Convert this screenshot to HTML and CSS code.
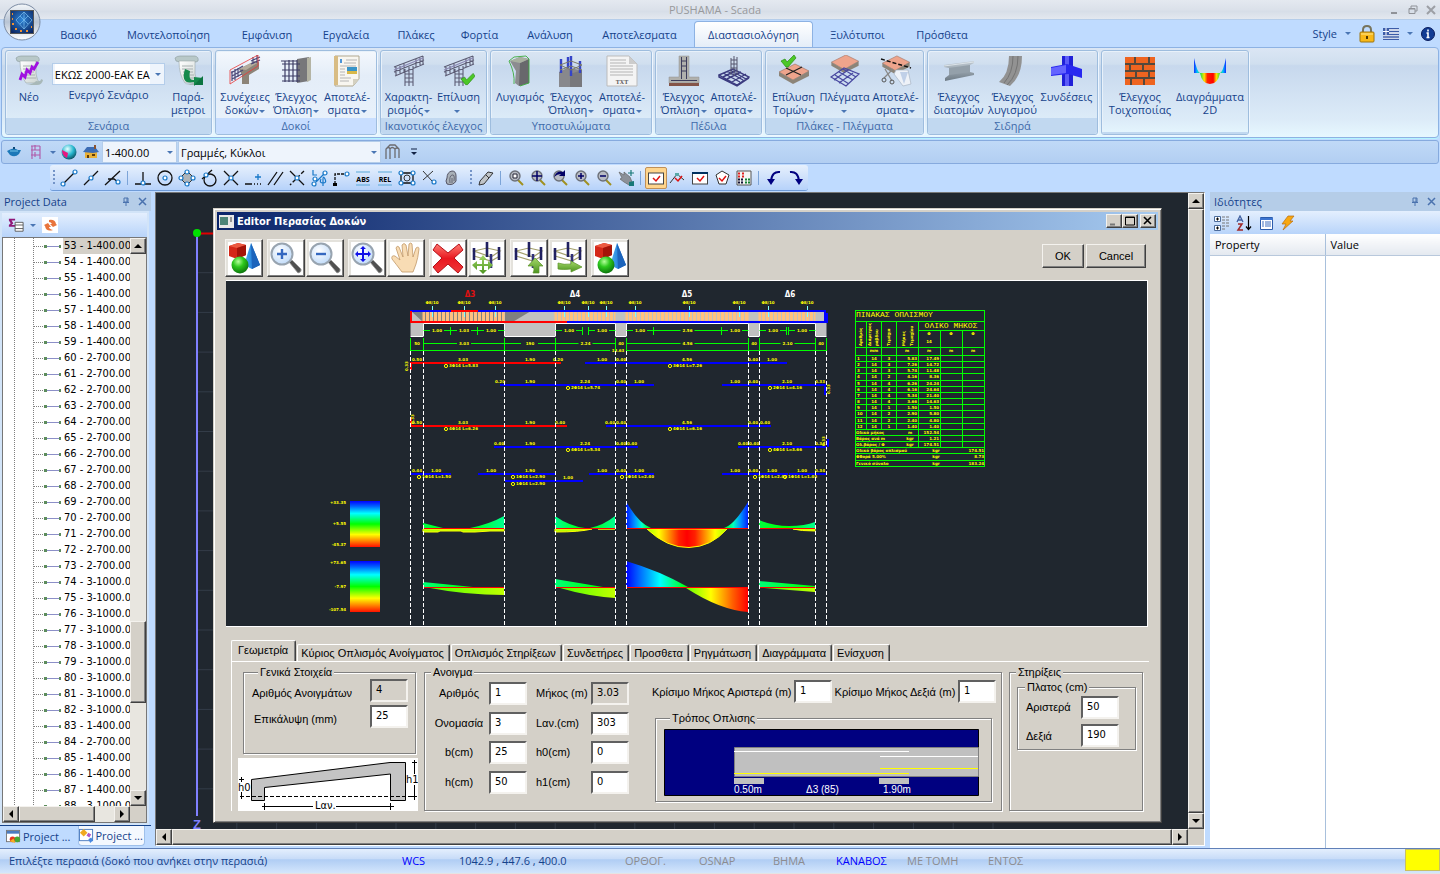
FILE: index.html
```html
<!DOCTYPE html>
<html lang="el">
<head>
<meta charset="utf-8">
<title>PUSHAMA - Scada</title>
<link rel="stylesheet" href="styles.css">
</head>
<body>
<svg class="defs" aria-hidden="true">
  <defs>
    <linearGradient id="gDoc" x1="0" y1="0" x2="1" y2="1"><stop offset="0" stop-color="#fff"/><stop offset="1" stop-color="#c9d2cf"/></linearGradient>
    <linearGradient id="gSteel" x1="0" y1="0" x2="0" y2="1"><stop offset="0" stop-color="#c2ccd4"/><stop offset="1" stop-color="#6d7a85"/></linearGradient>
    <radialGradient id="gBall" cx=".4" cy=".3" r=".8"><stop offset="0" stop-color="#b4ff9a"/><stop offset=".4" stop-color="#2cc81c"/><stop offset="1" stop-color="#06600a"/></radialGradient>
    <radialGradient id="gLens" cx=".4" cy=".35" r=".8"><stop offset="0" stop-color="#fff"/><stop offset="1" stop-color="#b4d4f8"/></radialGradient>
    <radialGradient id="gOrb" cx=".4" cy=".3" r=".8"><stop offset="0" stop-color="#e8ffff"/><stop offset=".5" stop-color="#28b8d0"/><stop offset="1" stop-color="#023848"/></radialGradient>
    <radialGradient id="gLogo" cx=".5" cy=".4" r=".7"><stop offset="0" stop-color="#2f86d8"/><stop offset="1" stop-color="#0a2460"/></radialGradient>
    <linearGradient id="gRing" x1="0" y1="0" x2="0" y2="1"><stop offset="0" stop-color="#f4f7fa"/><stop offset=".5" stop-color="#b8c4d4"/><stop offset="1" stop-color="#fff"/></linearGradient>
    <linearGradient id="gCone" x1="0" y1="0" x2="1" y2="0"><stop offset="0" stop-color="#4fb4f4"/><stop offset=".5" stop-color="#2a86dc"/><stop offset="1" stop-color="#0a4ea4"/></linearGradient>
    <linearGradient id="gX" x1="0" y1="0" x2="0" y2="1"><stop offset="0" stop-color="#ff7a70"/><stop offset=".5" stop-color="#e81820"/><stop offset="1" stop-color="#f03838"/></linearGradient>
    <linearGradient id="gLeaf" x1="0" y1="0" x2="0" y2="1"><stop offset="0" stop-color="#a4d868"/><stop offset="1" stop-color="#4c9420"/></linearGradient>
    <linearGradient id="gMag" x1="0" y1="0" x2="1" y2="0"><stop offset="0" stop-color="#1030ff"/><stop offset=".1" stop-color="#00c8ff"/><stop offset=".2" stop-color="#20e040"/><stop offset=".32" stop-color="#ffe000"/><stop offset=".42" stop-color="#ff2000"/><stop offset=".6" stop-color="#ff0000"/><stop offset=".7" stop-color="#ffe000"/><stop offset=".82" stop-color="#20e040"/><stop offset=".9" stop-color="#00c8ff"/><stop offset="1" stop-color="#1030ff"/></linearGradient>
    <linearGradient id="gRain" x1="0" y1="0" x2="0" y2="1"><stop offset="0" stop-color="#0000ff"/><stop offset=".12" stop-color="#0068ff"/><stop offset=".27" stop-color="#00ffff"/><stop offset=".5" stop-color="#00ff00"/><stop offset=".73" stop-color="#ffff00"/><stop offset="1" stop-color="#ff1000"/></linearGradient>
    <linearGradient id="gUp1" x1="0" y1="0" x2="1" y2="0"><stop offset="0" stop-color="#00ff40"/><stop offset=".5" stop-color="#00ff00"/><stop offset="1" stop-color="#00ff90"/></linearGradient>
    <linearGradient id="gUp2" x1="0" y1="0" x2="1" y2="0"><stop offset="0" stop-color="#00ff90"/><stop offset=".5" stop-color="#00ff00"/><stop offset="1" stop-color="#00ff90"/></linearGradient>
    <linearGradient id="gUp3" gradientUnits="userSpaceOnUse" x1="626" y1="0" x2="748" y2="0"><stop offset="0" stop-color="#0018ff"/><stop offset=".08" stop-color="#00a0ff"/><stop offset=".13" stop-color="#00ffd0"/><stop offset=".2" stop-color="#00ff00"/><stop offset=".8" stop-color="#00ff00"/><stop offset=".88" stop-color="#00ffc0"/><stop offset=".94" stop-color="#0090ff"/><stop offset="1" stop-color="#0020ff"/></linearGradient>
    <linearGradient id="gLow3" x1="0" y1="0" x2="1" y2="0"><stop offset="0" stop-color="#a0ff00"/><stop offset=".15" stop-color="#ffff00"/><stop offset=".4" stop-color="#ff2000"/><stop offset=".5" stop-color="#ff0000"/><stop offset=".6" stop-color="#ff2000"/><stop offset=".85" stop-color="#ffff00"/><stop offset="1" stop-color="#a0ff00"/></linearGradient>
    <linearGradient id="gSh3" x1="0" y1="0" x2="1" y2="0"><stop offset="0" stop-color="#0000ff"/><stop offset=".2" stop-color="#0060ff"/><stop offset=".55" stop-color="#00ffff"/><stop offset="1" stop-color="#00ff00"/></linearGradient>
    <linearGradient id="gSh4" x1="0" y1="0" x2="1" y2="0"><stop offset="0" stop-color="#60ff00"/><stop offset=".4" stop-color="#ffff00"/><stop offset=".75" stop-color="#ff6000"/><stop offset="1" stop-color="#ff0000"/></linearGradient>
    <linearGradient id="gShU" x1="0" y1="0" x2="1" y2="0"><stop offset="0" stop-color="#00ff78"/><stop offset="1" stop-color="#00ff00"/></linearGradient>
    <linearGradient id="gShL" x1="0" y1="0" x2="1" y2="0"><stop offset="0" stop-color="#50ff00"/><stop offset="1" stop-color="#c0ff00"/></linearGradient>
    <symbol id="i-scroll" viewBox="0 0 32 32"><path d="M3 3q2-2 5-2h15q4 1 3 5l-2 1H8l-4-1z" fill="#b8c8c8" stroke="#8a9a9c" stroke-width=".6"/><path d="M7 6h16v13q1 7 4 9H13q-6-8-6-22z" fill="url(#gDoc)" stroke="#9aa8a8" stroke-width=".6"/><path d="M23 26q5 1 5-2l2 1q-1 5-6 5H13q8-1 10-4z" fill="#a8b8b8"/><path d="M10 11h11M10 14h11M11 17h10M11 20h11M12 23h11" stroke="#a8b0b0"/></symbol>
    <symbol id="i-cage" viewBox="0 0 32 32"><g fill="none" stroke="#5c5c74" stroke-width="1.100"><path d="M1 12L30 1M1 17L31 5M2 21L31 9M12 14v17M16 12v19M20 11v20M12 19h8M12 23h8M12 27h8M3 11v9M7 9v10M11 8v9M23 4v9M27 2v9M30 1v8"/></g><path d="M1 15L30 3" stroke="#8c88b4" stroke-width="1.200"/></symbol>
    <symbol id="i-check" viewBox="0 0 16 14"><path d="M1 7l4-2 2 3 7-7 2 3-8 9H6z" fill="#4cc828" stroke="#2a8c14" stroke-width=".7"/></symbol>
    <symbol id="i-slab" viewBox="0 0 32 22"><path d="M1 9L17 1l14 7-16 9z" fill="#eea48c" stroke="#9c6a58" stroke-width=".6"/><path d="M1 9v4l14 8v-4zM31 8v5l-16 8v-4z" fill="#8c8478"/></symbol>
    <symbol id="i-shapes" viewBox="0 0 32 32"><path d="M1 4l9-3 8 2v10l-9 4-8-3z" fill="#d42818"/><path d="M1 4l8 2 9-3-8-2z" fill="#ec5a40"/><path d="M9 6v11l9-4V3z" fill="#a41408"/><path d="M23 1l9 22-8 4-8-4z" fill="url(#gCone)"/><path d="M23 1l1 26 8-4z" fill="#1c64bc"/><circle cx="12" cy="23" r="8.500" fill="url(#gBall)"/></symbol>
    <symbol id="i-lens" viewBox="0 0 32 32"><path d="M19 20l3-2 9 9q1 3-3 4z" fill="#505050" stroke="#999" stroke-width=".8"/><circle cx="12" cy="12" r="10.500" fill="url(#gLens)" stroke="#98a4b0" stroke-width="2"/></symbol>
    <symbol id="i-poles" viewBox="0 0 32 32"><path d="M3 9l13-3 13 3-9 6zM3 14l17 5 9-5" fill="none" stroke="#a4a06c" stroke-width="1.200"/><path d="M3 6v12M16 0v15M28 5v13" stroke="#202060" stroke-width="2.600"/><path d="M20 12v14" stroke="#303078" stroke-width="2.600"/></symbol>
    <symbol id="i-zoom" viewBox="0 0 16 16"><path d="M9 9l6 6" stroke="#a09020" stroke-width="2"/><circle cx="7" cy="6" r="5" fill="#b8bcc4" stroke="#6c7078" stroke-width="1.400"/></symbol>
    <symbol id="i-win" viewBox="0 0 16 12"><rect x=".5" y=".5" width="15" height="11" fill="#fff" stroke="#444"/></symbol>
    <symbol id="i-pin" viewBox="0 0 8 10"><path d="M2 1h4v4H2zM5 1v4M1 5.500h6M4 6v3" fill="none" stroke="#4a72ae"/></symbol>
    <symbol id="i-x" viewBox="0 0 9 9"><path d="M1 1l7 7M8 1L1 8" stroke="#4a72ae" stroke-width="1.500"/></symbol>
  </defs>
</svg>
<div class="app">
  <header class="titlebar">
    <span class="titlebar-text">PUSHAMA - Scada</span>
    <div class="win-controls">
      <button aria-label="Minimize"><svg viewBox="0 0 10 10"><path d="M1 8h6" stroke="#8f9298" stroke-width="2"/></svg></button>
      <button aria-label="Restore"><svg viewBox="0 0 10 10"><path d="M3 3V1h6v5H7M1 3.500h6v5H1zM1 4h6" fill="none" stroke="#8f9298"/></svg></button>
      <button aria-label="Close"><svg viewBox="0 0 10 10"><path d="M1 1l8 8M9 1L1 9" stroke="#9c9fa5" stroke-width="2"/></svg></button>
    </div>
  </header>
  <button class="orb" aria-label="Application menu"><svg viewBox="0 0 38 38"><circle cx="19" cy="19" r="18" fill="url(#gRing)" stroke="#7c8ca4"/><rect x="7.500" y="7.500" width="23" height="23" fill="url(#gLogo)" stroke="#555"/><path d="M21 9l8 8-8 9-8-9zM21 9v17M17 13l8 8M25 13l-8 8" fill="none" stroke="#7cc0f0" stroke-width=".7"/><path d="M9 11h1M9 16h1M9 21h2M12 26h2M17 28h2M23 28h2M28 24h1" stroke="#f09030" stroke-width="1.800"/></svg></button>
  <nav class="menu">
    <button class="m1">Βασικό</button><button class="m2">Μοντελοποίηση</button><button class="m3">Εμφάνιση</button><button class="m4">Εργαλεία</button><button class="m5">Πλάκες</button><button class="m6">Φορτία</button><button class="m7">Ανάλυση</button><button class="m8">Αποτελεσματα</button><button class="m9 active">Διαστασιολόγηση</button><button class="m10">Ξυλότυποι</button><button class="m11">Πρόσθετα</button>
    <div class="menu-right">
      <button>Style <i class="tri"></i></button>
      <button aria-label="Lock"><svg width="16" height="18" viewBox="0 0 16 18"><path d="M4 8V5q0-4 4-4t4 4v3" fill="none" stroke="#77745c" stroke-width="2"/><rect x="1" y="7" width="14" height="10" rx="1" fill="#f8b818" stroke="#9c7410"/><path d="M2 9h12" stroke="#ffe890"/><path d="M8 11v3" stroke="#503800" stroke-width="2"/></svg></button>
      <button aria-label="Language" class="flag"><svg width="16" height="12" viewBox="0 0 16 12"><path fill="#fff" d="M0 0h16v12H0z"/><path d="M0 .5h16M0 3.500h16M0 6.500h16M0 9h16M0 11.500h16" stroke="#3c5ca8" stroke-width="1.300"/><path d="M0 0h6v7H0z" fill="#3c5ca8"/><path d="M3 0v7M0 3.500h6" stroke="#fff"/></svg><i class="tri"></i></button>
      <button aria-label="Info"><svg width="14" height="14" viewBox="0 0 14 14"><circle cx="7" cy="7" r="6.500" fill="#123c94" stroke="#0a1c5c"/><path d="M7 2.500v2M5.500 6H7v4.500M5.500 10.500h3" stroke="#fff" stroke-width="1.600" fill="none"/></svg></button>
    </div>
  </nav>
  <section class="ribbon">
    <div class="group g-scen">
      <div class="group-body">
        <button class="big w46"><svg viewBox="0 0 32 32"><use href="#i-scroll"/><path d="M7 25l2-6 3 3 2-7 3 3 2-6 2 2 4-7" fill="none" stroke="#a010e0" stroke-width="2.800"/></svg><span>Νέο</span></button>
        <div class="combo-col"><div class="pick"><select aria-label="Ενεργό Σενάριο"><option>ΕΚΩΣ 2000-ΕΑΚ ΕΑΚ</option></select><i class="tri"></i></div><span>Ενεργό Σενάριο</span></div>
        <button class="big w46"><svg viewBox="0 0 32 32"><use href="#i-scroll"/><path d="M13 14q-5 16 9 13v4l9-8-9-1v3q-6 1-4-9z" fill="#158a4c"/><path d="M31 21v9h-9z" fill="#0c7440"/></svg><span>Παρά-<br>μετροι</span></button>
      </div><div class="cap">Σενάρια</div>
    </div>
    <div class="group g3 lit">
      <div class="group-body">
        <button class="big"><svg viewBox="0 0 32 32"><path d="M10 14l16-8 4 1v7l-10 6v9h-7V20z" fill="#8c8478"/><path d="M10 14l16-8 4 1-13 8z" fill="#b4ac9c"/><path d="M2 18l12-7M3 21l11-6M3 24l10-5M3 16v10M6 14v11M9 13v9M24 2v7M28 0v8M22 6l9-4M22 9l9-4" stroke="#4c4878" stroke-width="1.200"/><path d="M1 15L29 0v11L1 29z" fill="none" stroke="#e83838" stroke-width=".8"/></svg><span>Συνέχειες<br>δοκών <i class="tri"></i></span></button>
        <button class="big"><svg viewBox="0 0 32 32"><path d="M17 4l12-2v24l-12 2z" fill="#77777a"/><path d="M27 3l4-1v23l-4 2z" fill="#b4b4a4"/><path d="M2 9h18M2 15h18M2 21h18M2 26h18M1 6h16M5 6v21M9 5v22M13 5v22M17 5v22" stroke="#3c3c64" stroke-width="1.200"/></svg><span>Έλεγχος<br>Όπλιση <i class="tri"></i></span></button>
        <button class="big"><svg viewBox="0 0 32 32"><path d="M4 1h24v23l-6 7H4z" fill="#f8f6f0" stroke="#b0a890"/><path d="M3 1h4v29H3z" fill="#d8bc84"/><path d="M28 24l-6 7v-7z" fill="#d4d0c0"/><path d="M9 4h2v4H9z" fill="#4c94d8"/><path d="M15 5h11M13 8h12M9 11h16M9 14h5M9 17h5M9 20h5M9 23h11M9 26h9" stroke="#b4b4b4"/><path d="M16 12h10v7H16z" fill="#3894c8"/><path d="M16 16h10v3H16z" fill="#d8b848"/></svg><span>Αποτελέ-<br>σματα <i class="tri"></i></span></button>
      </div><div class="cap">Δοκοί</div>
    </div>
    <div class="group g2">
      <div class="group-body">
        <button class="big"><svg viewBox="0 0 32 32"><use href="#i-cage"/></svg><span>Χαρακτη-<br>ρισμός <i class="tri"></i></span></button>
        <button class="big"><svg viewBox="0 0 32 32"><use href="#i-cage"/><use href="#i-check" x="17" y="17" width="15" height="14"/></svg><span>Επίλυση<br><i class="tri"></i></span></button>
      </div><div class="cap">Ικανοτικός έλεγχος</div>
    </div>
    <div class="group g3">
      <div class="group-body">
        <button class="big"><svg viewBox="0 0 32 32"><path d="M6 6l10-4 9 2v24l-10 3-4-3 1-12z" fill="#8c8c90"/><path d="M16 8l9-4v24l-10 3z" fill="#68686c"/><path d="M6 6l10-4 9 2-9 4z" fill="#a8b0a0"/><path d="M5 6l5-4 12-1 3 3v24l-9 3M5 6q6 12 5 23" fill="none" stroke="#3cac3c" stroke-width=".9"/></svg><span>Λυγισμός</span></button>
        <button class="big"><svg viewBox="0 0 32 32"><path d="M4 17l8-4 15 2v17H4z" fill="#88888c"/><path d="M15 19l12-4v17H15z" fill="#78787c"/><path d="M6 4v14M16 1v20M25 6v12M13 2v11" stroke="#3444c8" stroke-width="2.400"/><path d="M5 10l11-4 11 4-11 5zM5 15l11-4 11 4" fill="none" stroke="#7c7c68"/></svg><span>Έλεγχος<br>Όπλιση <i class="tri"></i></span></button>
        <button class="big"><svg viewBox="0 0 32 32"><path d="M1 1h22l8 8v22H1z" fill="#f4f4f4" stroke="#bbb"/><path d="M23 1v8h8z" fill="#ccc"/><path d="M4 5h16M4 8h16M4 11h23M4 14h23M4 17h23M4 20h23" stroke="#b4b4b4" stroke-width="1.200"/><text x="16" y="29" class="ico-serif" text-anchor="middle">TXT</text></svg><span>Αποτελέ-<br>σματα <i class="tri"></i></span></button>
      </div><div class="cap">Υποστυλώματα</div>
    </div>
    <div class="group g2">
      <div class="group-body">
        <button class="big"><svg viewBox="0 0 32 32"><path d="M11 1h10v21h10v6H1v-6h10z" fill="#b0b0ac" stroke="#909090" stroke-width=".5"/><path d="M13.500 2v22M18.500 2v22M13 6h6M13 11h6M13 16h6M3 25.500h26" stroke="#3c3c5c"/><path d="M1 28h30v3H1z" fill="#845448"/></svg><span>Έλεγχος<br>Όπλιση <i class="tri"></i></span></button>
        <button class="big"><svg viewBox="0 0 32 32"><path d="M1 20l14-6 16 8-12 8zM5 18l17 9M9 16l16 9M12 15l16 9M5 22l14-7M9 24l14-7M14 27l14-8M1 20v2l18 9 12-8" fill="none" stroke="#3c3c80" stroke-width="1.400"/><path d="M13 3v17M16 1v20M19 2v18M13 5h6M13 9h6M13 13h6" stroke="#54546c"/></svg><span>Αποτελέ-<br>σματα <i class="tri"></i></span></button>
      </div><div class="cap">Πέδιλα</div>
    </div>
    <div class="group g-slab">
      <div class="group-body">
        <button class="big"><svg viewBox="0 0 32 32"><use href="#i-slab" y="8" width="32" height="22"/><path d="M8 13l15 7M24 12L8 20" stroke="#222" stroke-width="1.200"/><use href="#i-check" x="1" y="-1" width="18" height="14"/></svg><span>Επίλυση<br>Τομών <i class="tri"></i></span></button>
        <button class="big"><svg viewBox="0 0 32 32"><use href="#i-slab" y="-1" width="32" height="20"/><path d="M2 22l13-9 15 6-13 12zM6 20l14 9M10 17l14 8M5 25l14-10M10 28l14-10M14 14l13 8" fill="none" stroke="#4848a0" stroke-width="1.200"/></svg><span>Πλέγματα<br><i class="tri"></i></span></button>
        <button class="big"><svg viewBox="0 0 32 32"><use href="#i-slab" y="0" width="32" height="20"/><path d="M1 4l30 9" stroke="#111" stroke-width="1.500" stroke-dasharray="4 2"/><path d="M16 15h12l3 14-8 2-9-12z" fill="#eef2f8" stroke="#a8b4c4" stroke-width=".7"/><path d="M20 17l4 12 4-12z" fill="#c0d0e8"/><path d="M5 14l7 12M13 14L4 23" stroke="#888" stroke-width="1.300"/><circle cx="4" cy="25" r="2" fill="none" stroke="#555"/><circle cx="12" cy="27" r="2" fill="none" stroke="#555"/></svg><span>Αποτελέ-<br>σματα <i class="tri"></i></span></button>
      </div><div class="cap">Πλάκες - Πλέγματα</div>
    </div>
    <div class="group g-steel">
      <div class="group-body">
        <button class="big w54"><svg viewBox="0 0 32 32"><path d="M1 10l30-4v2l-4 2v7l4 1v2L2 26v-3l4-3v-7l-5-1z" fill="url(#gSteel)"/><path d="M6 13l21-3v7L6 20z" fill="#94a0aa"/><path d="M1 11l30-4" stroke="#dce4ea"/></svg><span>Έλεγχος<br>διατομών</span></button>
        <button class="big w54"><svg viewBox="0 0 32 32"><path d="M12 1l13 0q0 20-12 30l-11-4q10-8 10-26z" fill="#929292"/><path d="M16 1q0 17-9 27M21 1q0 19-11 29" fill="none" stroke="#747474"/></svg><span>Έλεγχος<br>λυγισμού</span></button>
        <button class="big w54"><svg viewBox="0 0 32 32"><path d="M11 1h11v30H11z" fill="#2020d8"/><path d="M14 1h4v30h-4z" fill="#5c5cf8"/><path d="M0 12l16-3 15 5v9l-14-4-17 2z" fill="#2828f0"/><path d="M0 13l15-3v8L0 20z" fill="#6464ff"/></svg><span>Συνδέσεις</span></button>
      </div><div class="cap">Σιδηρά</div>
    </div>
    <div class="group g-last">
      <div class="group-body">
        <button class="big w70"><svg viewBox="0 0 32 32"><path d="M1 2h30v28H1z" fill="#54483c"/><path d="M1 2h9v6H1zM12 2h12v6H12zM26 2h5v6h-5zM1 10h4v5H1zM7 10h11v5H7zM20 10h11v5H20zM1 17h10v5H1zM13 17h11v5H13zM26 17h5v5h-5zM1 24h5v6H1zM8 24h11v6H8zM21 24h10v6H21z" fill="#ee6420"/></svg><span>Έλεγχος<br>Τοιχοποιίας</span></button>
        <button class="big w70"><svg viewBox="0 0 32 32"><path d="M0 3q3 14 6 15h20q3-1 6-15v15h-6q-2 11-10 11T6 18H0z" fill="url(#gMag)"/></svg><span>Διαγράμματα<br>2D</span></button>
      </div><div class="cap empty"></div>
    </div>
  </section>
  <div class="quick">
    <button aria-label="Render"><svg viewBox="0 0 16 16"><path d="M3 6q5-3 9 0l3 0-2 4q-4 4-9 1l-3-4z" fill="#1c78b8"/><path d="M4 7h8" stroke="#74c4e8"/><path d="M7 4h2" stroke="#0c4878" stroke-width="2"/></svg></button>
    <button aria-label="Structure" class="wide"><svg viewBox="0 0 16 16"><path d="M4 2v13M12 2v13M7 1v5M7 8v5M3 2h9M3 6h9M3 11h9" stroke="#b058a8" stroke-width="1.100"/></svg><i class="tri"></i></button>
    <button aria-label="Material"><svg viewBox="0 0 16 16"><circle cx="8" cy="8" r="7.500" fill="url(#gOrb)"/><path d="M1 6l6 3-1 5q-5-2-5-8z" fill="#e81880"/></svg></button>
    <button aria-label="Level"><svg viewBox="0 0 16 16"><path d="M2 8h12v6H2z" fill="#e8b038"/><path d="M0 8l4-5h8l4 5-6 1z" fill="#3c6cb4"/><path d="M4 11h2v3H4zM9 10h3v2H9z" fill="#603c08"/><path d="M11 1h2v4h-2z" fill="#8c5430"/></svg></button>
    <div class="pick p-level"><select aria-label="Στάθμη"><option>1-400.00</option></select><i class="tri"></i></div>
    <div class="pick p-layer"><select aria-label="Layer"><option>Γραμμές, Κύκλοι</option></select><i class="tri"></i></div>
    <button aria-label="Frame"><svg viewBox="0 0 16 16"><path d="M2 15V5l4-4h5l4 4v9M6 15V5M11 14V5M2 5q3-3 4 0M6 5q2-3 5 0M11 5q2-2 4 0" fill="none" stroke="#6c6c70" stroke-width="1.300"/></svg></button>
    <button aria-label="More"><svg viewBox="0 0 16 16"><path d="M5 5h6" stroke="#124"/><path d="M5 8h6l-3 3z" fill="#124"/></svg></button>
  </div>
  <div class="snapbar" id="snapbar"></div>
  <main class="work">
    <aside class="left-pane">
      <div class="pane-head"><span>Project Data</span><svg class="pin"><use href="#i-pin"/></svg><svg class="px"><use href="#i-x"/></svg></div>
      <div class="pane-inner">
        <div class="tree-tools"><button aria-label="Sum"><svg viewBox="0 0 18 16"><path d="M1 1h7v2H4l2 3-2 2h4v2H1V8l2-2-2-3z" fill="#901878"/><path d="M8 5h9v10H8zM8 8h9M8 12h9" fill="#fff" stroke="#555"/></svg></button><i class="tri"></i><button aria-label="Refresh"><svg viewBox="0 0 16 16"><path fill="#fff" d="M0 0h16v16H0z"/><path d="M7 3q6-1 7 4l1 1-4 2-3-3h2q-1-2-3-2zM2 8l4-2 3 4H7q0 2 4 3-7 2-8-4z" fill="#e8743c"/></svg></button></div>
        <div class="tree">
          <div class="tree-row1"><ul id="tree"></ul>
            <div class="vbar"><button aria-label="Up"><b class="up"></b></button><span class="thumb t-tree"></span><button aria-label="Down"><b class="down"></b></button></div></div>
          <div class="hbar"><button aria-label="Left"><b class="lf"></b></button><span class="thumb h-tree"></span><button class="end" aria-label="Right"><b class="rt"></b></button><span class="corner"></span></div>
        </div>
      </div>
      <div class="pane-tabs"><button><svg viewBox="0 0 16 16"><rect x=".5" y="1.500" width="14" height="12" fill="#fff" stroke="#777"/><path d="M1 2h13v3H1z" fill="#4c7cc0"/><circle cx="7" cy="11" r="3" fill="#e83820"/><circle cx="12" cy="11" r="3" fill="#48a830"/><path d="M4 13l4-3 2 5z" fill="#f8b020"/></svg>Project ...</button><button class="on"><svg viewBox="0 0 16 16"><rect x=".5" y="1.500" width="14" height="12" fill="#fff" stroke="#4c7cc0"/><path d="M1 5l4-4 4 4-4 4z" fill="#f0a820"/><path d="M10 5l3 2-2 3-3-2z" fill="#b058c8"/><path d="M10 12l3-2 2 3-3 3z" fill="#4888e0"/></svg>Project ...</button></div>
    </aside>
    <section class="viewport">
      <div class="scene">
        <svg class="grid" id="grid"></svg>
        <div class="dialog" role="dialog" aria-label="Editor Περασίας Δοκών">
          <div class="dlg-title"><svg width="15" height="13" viewBox="0 0 15 13"><path fill="#e8e8e8" d="M0 0h15v13H0z"/><path d="M1 2h8v8H1z" fill="#4c8478"/><path d="M12 2v5" stroke="#444"/></svg><span>Editor Περασίας Δοκών</span>
            <div class="dlg-ctl"><button aria-label="Minimize"><svg viewBox="0 0 12 10"><path d="M2 8.500h5" stroke="#777" stroke-width="2"/></svg></button><button aria-label="Maximize"><svg viewBox="0 0 12 10"><path d="M1.500 1h9v8h-9zM1 1.500h10" fill="none" stroke="#000" stroke-width="1"/></svg></button><button class="gap" aria-label="Close"><svg viewBox="0 0 12 10"><path d="M2 1l7 7M9 1L2 8" stroke="#000" stroke-width="1.600"/></svg></button></div></div>
          <div class="dlg-tools">
            <div><button aria-label="Shapes"><svg viewBox="0 0 32 32"><use href="#i-shapes"/></svg></button></div>
            <div><button aria-label="Zoom in"><svg viewBox="0 0 32 32"><use href="#i-lens"/><path d="M7 12h10M12 7v10" stroke="#3468c0" stroke-width="2.400"/></svg></button><button aria-label="Zoom out"><svg viewBox="0 0 32 32"><use href="#i-lens"/><path d="M7 12h10" stroke="#3468c0" stroke-width="2.400"/></svg></button></div>
            <div><button aria-label="Zoom all"><svg viewBox="0 0 32 32"><use href="#i-lens"/><path d="M6 12h12M12 6v12" stroke="#1010e8" stroke-width="2"/><path d="M12 4l3 3H9zM12 20l3-3H9zM4 12l3-3v6zM20 12l-3-3v6z" fill="#1010e8"/></svg></button><button aria-label="Pan"><svg viewBox="0 0 32 32"><path d="M12 30q-6-8-10-13-1-4 3-3l5 4L6 6q1-3 3-1l4 10-1-12q2-3 4 0l2 11 1-12q2-2 3 0l1 13 3-9q3-2 3 1-1 9-3 15l-3 8z" fill="#f8dcb4" stroke="#c09868" stroke-width=".8"/></svg></button></div>
            <div><button aria-label="Delete"><svg viewBox="0 0 32 32"><path d="M5 2l11 9L27 2l4 6-9 8 9 9-5 6-10-9-10 9-5-6 9-9-9-8z" fill="url(#gX)" stroke="#b41018"/></svg></button><button aria-label="Move"><svg viewBox="0 0 32 32"><use href="#i-poles"/><path d="M12 13l4 5h-3v4h4v-3l5 4-5 5v-4h-4v4h3l-4 4-4-4h3v-4H6v4l-5-5 5-4v3h5v-4H8z" fill="url(#gLeaf)"/></svg></button></div>
            <div><button aria-label="Up"><svg viewBox="0 0 32 32"><use href="#i-poles"/><path d="M22 16l8 8h-4v7h-6q2-3 0-7h-5z" fill="url(#gLeaf)" stroke="#5c9428" stroke-width=".7"/></svg></button><button aria-label="Next"><svg viewBox="0 0 32 32"><use href="#i-poles"/><path d="M6 21q6 2 13 1v-3l11 6-11 5v-3q-8 1-13 0z" fill="url(#gLeaf)" stroke="#5c9428" stroke-width=".7"/></svg></button></div>
            <div><button aria-label="3D"><svg viewBox="0 0 32 32"><use href="#i-shapes"/></svg></button></div>
            <div class="okc"><button class="ok">OK</button><button class="cancel">Cancel</button></div>
          </div>
          <svg class="cad" id="cad" viewBox="226 281 921 345" preserveAspectRatio="xMinYMin meet"></svg>
          <div class="tabs"><button class="on">Γεωμετρία</button><button>Κύριος Οπλισμός Ανοίγματος</button><button>Οπλισμός Στηρίξεων</button><button>Συνδετήρες</button><button>Προσθετα</button><button>Ρηγμάτωση</button><button>Διαγράμματα</button><button>Ενίσχυση</button></div>
          <div class="page">
            <div class="col1">
              <fieldset class="gen"><legend>Γενικά Στοιχεία</legend>
                <label for="f1">Αριθμός Ανοιγμάτων</label><input id="f1" value="4" readonly>
                <label for="f2" class="in">Επικάλυψη (mm)</label><input id="f2" value="25">
              </fieldset>
              <svg class="beam" viewBox="0 0 180 53"><path fill="#fff" d="M0 0h180v53H0z"/><path d="M13.500 21.500L152 4.500h15.500v38H152.500V16L26.500 29.500v13h-13z" fill="#c4c4c4" stroke="#000"/><path d="M2 38.500h176" stroke="#000" stroke-dasharray="4 2"/><path d="M3.500 19v5M1 21.500h5M3.500 34v7M176.500 2v14M174 4.500h5M176.500 27v15M174 38.500h5M24 48.500h51M98 48.500h58M26.500 45v7M152.500 45v7" stroke="#000"/><text x="0" y="33">h0</text><text x="168" y="25">h1</text><text x="77" y="51">Lαν.</text></svg>
            </div>
            <fieldset class="span"><legend>Ανοιγμα</legend>
              <div class="nums">
                <label for="a1">Αριθμός</label><input id="a1" value="1"><label for="b1" class="l">Μήκος (m)</label><input id="b1" value="3.03" readonly>
                <label for="a2">Ονομασία</label><input id="a2" value="3"><label for="b2" class="l">Lαν.(cm)</label><input id="b2" value="303">
                <label for="a3">b(cm)</label><input id="a3" value="25"><label for="b3" class="l">h0(cm)</label><input id="b3" value="0">
                <label for="a4">h(cm)</label><input id="a4" value="50"><label for="b4" class="l">h1(cm)</label><input id="b4" value="0">
              </div>
              <div class="crit">
                <div class="crit-row"><label for="c1">Κρίσιμο Μήκος Αριστερά (m)</label><input id="c1" value="1"><label for="c2">Κρίσιμο Μήκος Δεξιά (m)</label><input id="c2" value="1"></div>
                <fieldset class="mode"><legend>Τρόπος Οπλισης</legend>
                  <svg viewBox="0 0 315 67" class="modepic"><path d="M.5.500h314v66H.5z" fill="#000080" stroke="#000"/><path d="M70.500 18.500h244v29h-244z" fill="#c0c0c0" stroke="#808080"/><path d="M70 22.500h175M216 27.500h98" stroke="#fff"/><path d="M70 44.500h175M216 39.500h98" stroke="#ffff00"/><path d="M70 49h30v6H70zM215 49h30v6h-30z" fill="#c0c0c0"/><text x="70" y="64">0.50m</text><text x="142" y="64">Δ3 (85)</text><text x="219" y="64">1.90m</text></svg>
                </fieldset>
              </div>
            </fieldset>
            <fieldset class="supp"><legend>Στηρίξεις</legend>
              <fieldset class="width"><legend>Πλατος (cm)</legend>
                <label for="d1">Αριστερά</label><input id="d1" value="50"><label for="d2">Δεξιά</label><input id="d2" value="190">
              </fieldset>
            </fieldset>
          </div>
        </div>
      </div>
      <div class="vbar main"><button aria-label="Up"><b class="up"></b></button><span class="thumb grow"></span><button aria-label="Down"><b class="down"></b></button></div>
      <div class="hbar main"><button aria-label="Left"><b class="lf"></b></button><span class="thumb grow"></span><button aria-label="Right"><b class="rt"></b></button></div>
      <span class="corner"></span>
    </section>
    <aside class="right-pane">
      <div class="pane-head"><span>Ιδιότητες</span><svg class="pin"><use href="#i-pin"/></svg><svg class="px"><use href="#i-x"/></svg></div>
      <div class="prop-tools">
        <button aria-label="Categorized"><svg viewBox="0 0 16 16"><path d="M.5 1.500h6v5h-6zM.5 10.500h6v5h-6z" fill="#fff" stroke="#4c6c9c"/><path d="M2 4h3M3.500 2.500v3M2 13h3M3.500 11.500v3" stroke="#000"/><path d="M8 2h3M12 2h3M8 5h3M12 5h3M8 8h3M12 8h3M8 11h3M12 11h3M8 14h3" stroke="#777"/></svg></button>
        <button aria-label="Alphabetical"><svg viewBox="0 0 16 16"><path d="M1 7l3-6 3 6M2 5h4" fill="none" stroke="#4060a0" stroke-width="1.300"/><path d="M2 9h4l-4 6h5" fill="none" stroke="#a02828" stroke-width="1.500"/><path d="M12.500 1v13M10 11.500l2.500 3 2.500-3" fill="none" stroke="#000" stroke-width="1.200"/></svg></button>
        <button aria-label="Pages"><svg viewBox="0 0 16 16"><path d="M2.500 2.500h12v12h-12z" fill="#fff" stroke="#2c5cac"/><path d="M2 3h13v2H2z" fill="#3c74d0"/><path d="M4 7h2M4 9h2M4 11h2M7 7h6M7 9h6M7 11h6" stroke="#4070c0"/></svg></button>
        <button aria-label="Events"><svg viewBox="0 0 16 16"><path d="M8 1h6l-4 5h3L3 15l3-6H2z" fill="#f8a810" stroke="#b86c10" stroke-width=".7"/></svg></button>
      </div>
      <table class="props"><thead><tr><th>Property</th><th>Value</th></tr></thead><tbody><tr><td></td><td></td></tr></tbody></table>
    </aside>
  </main>
  <footer class="status"><span>Επιλέξτε περασιά (δοκό που ανήκει στην περασιά)</span><span class="blue">WCS</span><span>1042.9 , 447.6 , 400.0</span><span class="off">ΟΡΘΟΓ.</span><span class="off">OSNAP</span><span class="off">ΒΗΜΑ</span><span class="blue">ΚΑΝΑΒΟΣ</span><span class="off">ΜΕ ΤΟΜΗ</span><span class="off">ΕΝΤΟΣ</span><i class="swatch"></i></footer>
</div>
<script src="app.js"></script>
</body>
</html>
```
FILE: styles.css
```css
*{box-sizing:border-box}
body{margin:0;background:#bfdbff;color:#15428b;font-family:"Open Sans","Noto Sans",sans-serif;font-size:11px}
button{font:inherit;color:inherit;background:none;border:0;padding:0;margin:0}
svg{display:block;flex:none}
.defs{position:absolute;width:0;height:0}
.app{display:flex;flex-direction:column;min-height:100vh;position:relative}
.tri{display:inline-block;width:0;height:0;border:3px solid transparent;border-top-color:#4a76b4;border-bottom:0;vertical-align:middle;flex:none}

.titlebar{height:20px;display:flex;align-items:center;justify-content:center;position:relative;background:linear-gradient(#e4e9f0,#dbe1ea 50%,#d7dee8 60%,#e3e8ef);border-bottom:1px solid #b5cdea;color:#98999c;font-size:11px}
.titlebar-text{padding-right:10px}
.win-controls{position:absolute;right:4px;top:5px;display:flex;gap:8px}
.win-controls svg{width:10px;height:10px}
.orb{position:absolute;left:3px;top:3px;width:38px;height:38px}
.menu{height:27px;display:flex;align-items:flex-end;padding:0 5px 0 50px}
.menu>button{height:25px;font-size:11px;flex:none;white-space:nowrap}
.m1{width:57px}.m2{width:123px}.m3{width:74px}.m4{width:84px}.m5{width:56px}.m6{width:71px}.m7{width:70px}.m8{width:109px}.m9{width:119px}.m10{width:89px}.m11{width:80px}
.menu .active{background:linear-gradient(#fff,#e4edf8);border:1px solid #8db2e3;border-bottom:0;border-radius:4px 4px 0 0;height:26px;position:relative;z-index:1}
.menu-right{margin-left:auto;display:flex;align-items:center;gap:8px;height:27px;font-size:11px}
.menu-right button{display:flex;align-items:center;gap:8px}
.ribbon{display:flex;gap:3px;height:91px;margin:0 1px;padding:2px 3px 3px;border:1px solid #8db2e3;border-radius:4px;background:linear-gradient(#dbe6f4,#d0dfef 18%,#c7d8ed 20%,#dcebf8 80%,#e6f8ff);box-shadow:0 1px 0 #b4f4ff}
.group{display:flex;flex-direction:column;flex:none;height:85px;border:1px solid #9ebdde;border-radius:3px;box-shadow:1px 1px 0 #eef6ff,inset 1px 1px 0 #e8f1fa}
.group-body{flex:1;display:flex;justify-content:center}
.cap{height:16px;line-height:16px;text-align:center;background:#c1d8f0;color:#3e6aaa;font-size:11px;border-radius:0 0 3px 3px;white-space:nowrap}
.cap.empty{height:2px}
.g-scen{width:207px}.g3{width:162px}.g-slab{width:159px}.g2{width:107px}.g-steel{width:171px}.g-last{width:148px}
.lit{background:linear-gradient(#f4f8fd,#e4edf8 30%,#eaf3fc)}
.lit .cap{background:#c8deff}
.big{width:51px;display:flex;flex-direction:column;align-items:center;padding-top:4px;line-height:13px;font-size:11px;white-space:nowrap}
.g2 .big{width:50px}
.big svg{width:32px;height:32px}
.big span{padding-top:3px}
.big .tri{margin-left:-2px}
.big.w46{width:46px}.big.w54{width:54px}.big.w70{width:70px}
.ico-serif{font:bold 6px "Liberation Serif",serif;fill:#555}
.combo-col{width:114px;padding-top:12px;text-align:center;line-height:16px}
.combo-col>span{display:block;padding-top:2px}
.pick{position:relative;background:#eef4fc;border:1px solid #b4cdea;display:flex;align-items:center}
.pick select{appearance:none;border:0;background:none;width:100%;height:20px;padding:0 14px 0 2px;font:11px "Open Sans","Noto Sans",sans-serif;color:#000}
.combo-col select{background:#fff;background-clip:content-box}
.pick .tri{position:absolute;right:3px}

.quick{display:flex;align-items:center;height:24px;margin:2px 1px 1px;padding-left:1px;border:1px solid #86aade;border-radius:3px;background:linear-gradient(#c0d9f7,#b2cef2)}
.quick button{width:22px;display:flex;align-items:center;justify-content:center;gap:6px}
.quick .wide{width:33px}
.quick svg{width:16px;height:16px}
.p-level{width:75px;margin-right:1px}.p-layer{width:203px}
.snapbar{display:flex;align-items:center;height:26px;width:758px;margin:0 0 1px 50px;padding-left:3px;background:linear-gradient(#e6f0fd,#cfe1fb 50%,#b6d2fa);border-bottom:1px solid #6f9bd8;border-radius:3px}
.snapbar button{width:22px;height:22px;display:flex;align-items:center;justify-content:center}
.snapbar svg{width:18px;height:18px}
.snapbar .hot{background:#ffd58c;border:1px solid #c09058;border-radius:2px}
.snapbar .sep{width:1px;height:14px;background:#7ca4d8;margin:0 4px 0 3px}
.snapbar .grip{width:2px;height:16px;margin-right:3px;background:repeating-linear-gradient(#7494c8 0 2px,transparent 2px 4px)}
.snapbar .segend{margin-left:8px}
.snap-text{font:bold 7px "Open Sans",sans-serif}

.work{display:flex;flex:1;min-height:0}
.left-pane{width:151px;flex:none;display:flex;flex-direction:column;margin-right:4px}
.pane-head{display:flex;align-items:center;height:19px;padding:0 4px;background:#b5cde8;gap:8px;flex:none}
.pane-head span{flex:1}
.pin{width:8px;height:10px}.px{width:9px;height:9px}
.pane-inner{display:flex;flex-direction:column;flex:1;margin-right:2px;border:2px solid #d2e4f8;background:#d2e4f8}
.tree-tools{display:flex;align-items:center;height:24px;padding-left:6px;gap:6px;background:linear-gradient(#e4effe,#b8d4fa)}
.tree-tools svg{width:16px;height:16px}
.tree{flex:1;display:flex;flex-direction:column;border:1px solid #777;background:#fff}
.tree-row1{display:flex;flex:1;min-height:568px;position:relative}
.tree ul{position:absolute;inset:0 15px 0 0;margin:0;padding:0;list-style:none;overflow:hidden;color:#000;font:11px/16px "DejaVu Sans Condensed","Noto Sans",sans-serif;white-space:nowrap}
.tree li{display:flex;height:16px;padding-left:10px}
.tree li svg{width:50px;height:16px}
.tree li.sel span{background:#d4d0c8;flex:1}
.tree li span{padding-left:1px}
.tree .vbar{position:relative}
.vbar{width:16px;margin-left:auto;display:flex;flex-direction:column;background:#e8e6e0}
.hbar{height:16px;display:flex;background:#e8e6e0}
.vbar button,.hbar button,.thumb,.ok,.cancel,.dlg-ctl button,.dlg-tools div:not(.okc) button{background:#d4d0c8;border:1px solid;border-color:#f4f2ee #404040 #404040 #f4f2ee;box-shadow:inset -1px -1px #808080}
.vbar button,.hbar button{width:16px;height:16px;flex:none;display:flex;align-items:center;justify-content:center}
.thumb{display:block}
.t-tree{height:82px;margin-top:367px}
.vbar button:last-child{margin-top:auto}
.h-tree{width:76px}
.hbar .end{margin-left:auto}
.corner{background:#d4d0c8;width:16px}
.grow{flex:1}
b.up,b.down,b.lf,b.rt{border:4px solid transparent;width:0;height:0}
b.up{border-bottom-color:#000;border-top:0}b.down{border-top-color:#000;border-bottom:0}
b.lf{border-right-color:#000;border-left:0}b.rt{border-left-color:#000;border-right:0}
.pane-tabs{display:flex;height:23px;border-top:1px solid #15428b;align-items:flex-start;padding:0 6px;gap:4px}
.pane-tabs button{display:flex;align-items:center;gap:2px;height:20px;width:68px;white-space:nowrap}
.pane-tabs .on{background:#f4f8fe;border:1px solid #9fc0ea;border-top:0;border-radius:0 0 4px 4px}
.pane-tabs svg{width:15px;height:15px}

.viewport{flex:1;min-width:0;margin-bottom:2px;display:grid;grid-template-columns:1fr 16px;grid-template-rows:1fr 16px;border:1px solid #777;border-right-color:#fff;border-bottom-color:#fff}
.scene{background:#20272f;position:relative;min-width:0}
.grid{position:absolute;left:0;top:0;width:100%;height:100%}
.axis-z{font:bold 13px "Liberation Sans",sans-serif;fill:#8080ff}
.dialog{position:absolute;left:57px;right:26px;top:15px;padding:3px;background:#d4d0c8;border:1px solid;border-color:#d4d0c8 #404040 #404040 #d4d0c8;box-shadow:inset 1px 1px #fff,inset -1px -1px #808080;color:#000;font:11px "Liberation Sans","Noto Sans",sans-serif}
.dlg-title{display:flex;align-items:center;height:18px;padding:0 2px;gap:3px;background:linear-gradient(90deg,#0a246a,#a6caf0);color:#fff;font:bold 11px "DejaVu Sans Condensed","Noto Sans",sans-serif}
.dlg-ctl{margin-left:auto;display:flex}
.dlg-ctl button{width:16px;height:14px;display:flex;align-items:center;justify-content:center}
.dlg-ctl .gap{margin-left:2px}
.dlg-ctl svg{width:12px;height:10px}
.dlg-tools{display:flex;gap:4px;padding:9px 8px 3px}
.dlg-tools>div{display:flex;gap:1px}
.dlg-tools div:not(.okc) button{width:38px;height:38px;padding:2px;background:#fff;box-shadow:inset -1px -1px #808080,inset 2px 2px #e4e2dc}
.dlg-tools svg{width:32px;height:32px}
.dlg-tools .okc{margin-left:auto;gap:2px;padding:5px 4px 0 0}
.ok,.cancel{height:24px}
.ok{width:42px}.cancel{width:60px}
.cad{width:calc(100% - 19px);margin:0 10px 0 9px;background:#20272f;border-top:1px solid #fff;border-right:1px solid #fff;border-bottom:1px solid #fff;height:347px}
.cad text{font:bold 4px "DejaVu Sans",sans-serif;fill:#ff0}
.cad .nm{font:bold 8px "DejaVu Sans Condensed",sans-serif;fill:#fff}
.cad .red{fill:#e01010}
.cad .tt{font:8px "Liberation Mono",monospace}
.tabs{display:flex;align-items:flex-end;margin:13px 8px 0 14px;height:21px}
.tabs button{height:17px;padding:0 5px 0 3px;margin-left:1px;border:1px solid;border-color:#fff #404040 transparent #fff;border-radius:2px 2px 0 0;border-bottom:0;box-shadow:inset -1px 0 #808080;white-space:nowrap;flex:none}
.tabs .on{height:21px;padding:0 7px 2px 6px;margin:0}
.page{display:flex;align-items:flex-start;margin:0 9px 8px 14px;border-left:1px solid #fff;border-top:1px solid #fff;padding:3px 0 0 6px;min-height:150px}
fieldset{min-width:0;margin:0;border:1px solid #808080;box-shadow:1px 1px #fff,inset 1px 1px #fff;padding:0}
legend{line-height:14px;padding:0 2px;margin-left:6px;background:#d4d0c8}
input{width:38px;height:23px;border:2px solid;border-color:#606060 #f4f2ee #f4f2ee #606060;background:#fff;padding:0 4px 2px;font:11px "DejaVu Sans Condensed","Noto Sans",sans-serif;color:#000;border-radius:0;outline:0}
input[readonly]{background:#d4d0c8}
.col1,.span,.supp{flex:none}
.col1{width:180px}
.gen{width:173px;margin-left:5px;height:89px;display:grid;grid-template-columns:118px 38px;grid-auto-rows:23px;row-gap:3px;padding-left:8px;align-items:center}
.gen label{padding-top:5px}
.gen .in{padding-left:2px}
.beam{width:180px;height:53px;margin-top:4px}
.beam text{font:11px "DejaVu Sans Condensed",sans-serif}
.span{width:578px;margin-left:6px;height:146px;display:flex}
.nums{display:grid;grid-template-columns:64px 38px 64px 38px;grid-template-rows:30px 29px 30px 28px;align-items:start;padding-top:3px;height:120px;flex:none}
.nums label{line-height:22px;text-align:center;padding-left:4px}
.nums .l{text-align:left;padding-left:9px;white-space:nowrap}
.crit{width:344px;margin-left:23px;flex:none}
.crit-row{display:flex;align-items:center;justify-content:space-between;white-space:nowrap;height:23px;margin-top:1px}
.mode{width:337px;height:91px;margin:8px 0 0 3px;padding-left:8px}
.modepic{width:315px;height:67px;margin-top:4px}
.modepic text{font:10px "Liberation Sans",sans-serif;fill:#fff}
.supp{width:134px;height:146px;margin-left:7px}
.width{width:119px;height:70px;margin:1px 0 0 7px;display:grid;grid-template-columns:62px 38px;row-gap:2px;padding-left:1px;align-items:center}
.width label{padding-left:7px}

.right-pane{width:230px;flex:none;margin-left:5px;display:flex;flex-direction:column;background:#fff}
.prop-tools{display:flex;gap:6px;padding:0 4px;height:23px;align-items:center;background:linear-gradient(#e4effe,#b8d4fa)}
.prop-tools svg{width:16px;height:16px}
.props{flex:1;border-collapse:collapse;width:100%;table-layout:fixed;color:#000;height:1px}
.props th{height:21px;text-align:left;font-weight:normal;padding:0 5px;background:linear-gradient(#fff,#e4e9f0);border-bottom:1px solid #b8c8dc}
.props th:first-child,.props td:first-child{border-right:1px solid #a8c0dc}
.props td{padding:0}
.status{display:grid;grid-template-columns:393px 57px 166px 74px 74px 63px 71px 81px 1fr 35px;align-items:center;height:26px;padding:0 0 2px 9px;border-top:1px solid #6080b8;border-bottom:1px solid #e4e4e4;background:linear-gradient(#e4effd,#c8dcf8 40%,#b0cdf4 45%,#d4e6fc);white-space:nowrap}
.blue{color:#00f}.off{color:#8c8c90}
.swatch{background:#ff0;height:22px;border:1px solid #c8c060}
```
FILE: app.js
```js
/* project tree */
const level = (n) => {
  if (n < 60 || n === 83 || (n > 84 && n < 88)) return "1-400.00";
  if (n < 74 || n === 84) return "2-700.00";
  return "3-1000.0";
};
const rows = [];
for (let n = 53; n <= 88; n++) {
  rows.push(`<li class="${n === 53 ? "sel" : ""}"><svg viewBox="0 0 50 16"><path d="M1.500 0v16M20.500 0v16M21 8.500h10" stroke="#808080" stroke-dasharray="1 1"/><path d="M34 8.500h12" stroke="#8c90c8"/><path d="M31 7h3v3h-3zM46 7h2v3h-2z" fill="#5c8c5c"/></svg><span>${n} - ${level(n)}</span></li>`);
}
document.getElementById("tree").innerHTML = rows.join("");

/* snap toolbar */
const K = 'fill="none" stroke="#111" stroke-width="1.300"';
const N = (x, y) => `<circle cx="${x}" cy="${y}" r="2" fill="#fff" stroke="#1878c8" stroke-width="1.200"/>`;
const Z = '<use href="#i-zoom" x="1" y="1" width="16" height="16"/>';
const Wn = '<use href="#i-win" x="1" y="3" width="16" height="13"/>';
const T = '<path d="M6 9l3 3 4-5" fill="none" stroke="#e01010" stroke-width="1.500"/>';
const icons = [
  "grip",
  `<path d="M3 15L15 3" ${K}/>${N(3, 15)}${N(15, 3)}`,
  `<path d="M2 16L16 2" ${K}/>${N(9, 9)}`,
  `<path d="M1 16L16 2M4 10h6l4 3" ${K}/>${N(14, 13)}`,
  "sep",
  `<path d="M9 3v12M1 15h16" ${K}/>${N(9, 14)}`,
  `<circle cx="9" cy="9" r="7" ${K}/>${N(9, 9)}`,
  `<path d="M9 2l7 7-7 7-7-7z" fill="#b0b4b8" stroke="#333"/>${N(9, 3)}${N(15, 9)}${N(9, 15)}${N(3, 9)}`,
  `<path d="M2 10L12 1" ${K}/><circle cx="10" cy="11" r="6" ${K}/>${N(6, 6)}`,
  `<path d="M2 2l14 14M16 2L2 16" ${K}/>${N(9, 9)}`,
  `<path d="M1 15h7M10 15h1M13 15h1M16 15h1" ${K}/><path d="M14 5v6M11 8h6" stroke="#1878c8" stroke-width="1.300"/>`,
  `<path d="M2 16L11 3M8 16l9-13" ${K}/>`,
  `<path d="M2 2l14 14" ${K}/><path d="M16 2L2 16" ${K} stroke-dasharray="4 2"/>${N(9, 9)}`,
  `<path d="M3 1v5h4M6 13l8-8" fill="none" stroke="#1878c8" stroke-width="1.200"/>${N(15, 4)}${N(5, 10)}${N(4, 15)}<path d="M11 10q-2 4 2 4t2-4-2 0v7" fill="none" stroke="#1878c8" stroke-width="1.200"/>`,
  `<path d="M3 15V5h11" ${K} stroke-dasharray="3 1"/>${N(15, 5)}<path d="M1 14h4v3H1z"/>`,
  `<path d="M2 3h14M2 16h14" stroke="#58a8d8"/><text x="9" y="13" text-anchor="middle" class="snap-text">ABS</text>`,
  `<path d="M2 3h14M2 16h14" stroke="#58a8d8"/><text x="9" y="13" text-anchor="middle" class="snap-text">REL</text>`,
  `<path d="M3 4h12v10H3z" ${K}/><circle cx="9" cy="9" r="3" fill="none" stroke="#333"/>${N(3, 4)}${N(15, 4)}${N(3, 14)}${N(15, 14)}`,
  `<path d="M3 2l9 10M13 2L3 11" fill="none" stroke="#333"/>${N(14, 13)}`,
  `<path d="M5 15q-2-3 0-6 0-6 5-7 4 0 4 5v5q-3 5-9 3z" fill="#a8b0b8" stroke="#556"/><path d="M8 14q-1-7 2-8t2 6M10 9v5" fill="none" stroke="#556" stroke-width=".8"/>`,
  "segend",
  `<path d="M3 12l8-9 5 1-9 11-5 1z" fill="#c0c4c8" stroke="#333"/><path d="M9 6l3 3" stroke="#333"/>`,
  "sep",
  `${Z}<path d="M6 5h4v4H6z" fill="#fff" stroke="#223"/>`,
  `${Z}<path d="M3 7h10M8 2v10" stroke="#006" stroke-width="1.500"/>`,
  `${Z}<path d="M3 8q3-7 9-5l2-2v6H8l2-2q-4 0-7 3z" fill="#006"/>`,
  `${Z}<path d="M5 7h6M8 4v6" stroke="#006" stroke-width="1.500"/>`,
  `${Z}<path d="M5 7h6" stroke="#006" stroke-width="1.500"/>`,
  `<path d="M2 3l5 3 0-3 6 5 2 5-3 3-5-3-4-3 2-1z" fill="#8c9098" stroke="#666" stroke-width=".7"/><path d="M14 1v6M11 4h6" stroke="#187878" stroke-width="1.200"/><path d="M12 13l5-1v5h-5z" fill="#187878"/>`,
  "sep",
  `*${Wn}${T}`,
  `<path d="M1 14l7-9 7 6" fill="none" stroke="#333"/><path d="M6 4h4v3H6z" fill="#58a8a8"/>${T}`,
  `${Wn}<path d="M1 4h16" stroke="#003060" stroke-width="2"/>${T}`,
  `<path d="M3 6l6-4 7 4-3 9H6z" fill="#fff" stroke="#333"/>${T}`,
  `<path d="M2 2h14v14H2z" fill="#f4f4f4" stroke="#555"/><path d="M3 4.500h6M3 7.500h8" stroke="#e02020" stroke-width="2" stroke-dasharray="2 2"/><path d="M3 10.500h6M3 13.500h6" stroke="#113" stroke-width="2" stroke-dasharray="2 1"/><path d="M10 10.500h5M10 13.500h5" stroke="#108030" stroke-width="2" stroke-dasharray="2 1"/>`,
  "sep",
  `<path d="M15 3q-8-1-9 9" fill="none" stroke="#000080" stroke-width="2"/><path d="M2 10h8l-4 6z" fill="#000080"/>`,
  `<path d="M3 3q8-1 9 9" fill="none" stroke="#000080" stroke-width="2"/><path d="M8 10h8l-4 6z" fill="#000080"/>`
];
document.getElementById("snapbar").innerHTML = icons.map((i, k) => {
  if (i === "grip") return '<i class="grip"></i>';
  if (i === "segend") return '<i class="grip segend"></i>';
  if (i === "sep") return '<i class="sep"></i>';
  const hot = i[0] === "*";
  return `<button class="${hot ? "hot" : ""}" aria-label="Snap ${k}"><svg viewBox="0 0 18 18">${hot ? i.slice(1) : i}</svg></button>`;
}).join("");

/* model grid behind the editor */
let g = "";
for (let i = 1; i < 15; i++) g += `<path d="M41 ${40 + i * 39.7}h797" stroke="#333c48"/>`;
for (let i = 1; i <= 20; i++) g += `<path d="M${41 + i * 39.8} 40v600" stroke="#333c48"/>`;
g += '<path d="M41 40.500h20" stroke="#e00000" stroke-width="2"/><path d="M41 40v583" stroke="#8080ff" stroke-width="2"/><circle cx="41" cy="40" r="4" fill="#00e000"/><text class="axis-z" x="37" y="636">Z</text>';
document.getElementById("grid").innerHTML = g;

/* continuous beam drawing */
const o = [];
const line = (x1, y1, x2, y2, c, w = 1, extra = "") => o.push(`<path d="M${x1} ${y1}L${x2} ${y2}" stroke="${c}" stroke-width="${w}" ${extra}/>`);
const rect = (x, y, w, h, c) => o.push(`<rect x="${x}" y="${y}" width="${w}" height="${h}" fill="${c}"/>`);
const text = (x, y, s, cls = "", a = "middle") => o.push(`<text x="${x}" y="${y}" class="${cls}" text-anchor="${a}">${s}</text>`);
const G = "#00ff00", B = "#0000ff", R = "#ff0000";
const dim = (a, b, y, s) => {
  const m = (a + b) / 2;
  line(a, y, m - 7, y, G); line(m + 7, y, b, y, G);
  text(m, y + 1, s);
};
const spans = [[423.5, 504.5, "3.03"], [555.5, 615.5, "2.24"], [626.5, 748.5, "4.56"], [759.5, 815.5, "2.10"]];
const sups = [[410.5, 423.5, "50"], [504.5, 555.5, "190"], [615.5, 626.5, "40"], [748.5, 759.5, "40"], [815.5, 826.5, "40"]];
const links = [432, 464, 495, 564, 588, 606, 635, 689, 739, 768, 807];
text(470, 297, "Δ3", "nm red"); text(575, 297, "Δ4", "nm"); text(687, 297, "Δ5", "nm"); text(790, 297, "Δ6", "nm");
links.forEach((x) => text(x, 304, "Φ8/10"));
rect(410, 310, 416, 13, "#c0c0c0");
o.push('<path d="M411 311l13 12V311zM505 311h26l-20 12h-6z" fill="#808080"/>');
spans.forEach(([a, b], k) => {
  rect(a - 1, 312, b - a + 1, 10, "#ffc080");
  for (let x = a + 2; x < b; x += 4) line(x, 312, x, 322, k ? "#c0c0c0" : "#808080");
});
links.forEach((x) => line(x + 0.5, 306, x + 0.5, 317, "#80ffff"));
line(410, 311, 826, 311, B, 2); line(451, 311, 478, 311, R, 2);
line(410, 322, 567, 322, R, 2); line(567, 322, 826, 322, B, 2);
line(411, 311, 411, 322, R, 2);
o.push('<path d="M820 311h5v11h2v-9" fill="none" stroke="#0000ff" stroke-width="2"/>');
sups.forEach(([a, b, s]) => {
  rect(a, 323, b - a, 13, "#c0c0c0"); line(a, 336.5, b, 336.5, "#fff");
  text((a + b) / 2, 345, s);
});
spans.forEach(([a, b, s], k) => {
  o.push(`<path d="M${a} 336V323.500H${b}V336" fill="none" stroke="#fff"/>`);
  const q = 27;
  dim(a, a + q, 330.5, "1.00"); dim(b - q, b, 330.5, "1.00");
  [a + q, b - q].forEach((x) => line(x, 327, x, 335, G));
  if (k === 0) dim(a + q, b - q, 330.5, "1.03");
  if (k === 2) dim(a + q, b - q, 330.5, "2.56");
  dim(a, b, 343.5, s);
});
line(504, 343.5, 521, 343.5, G); line(538, 343.5, 555, 343.5, G);
line(410, 350.5, 610, 350.5, G); line(626, 350.5, 826, 350.5, G);
text(618, 352, "15.63");
/* longitudinal bars: x1, x2, y, colour */
[[410, 561, 363, R], [698, 748, 363, B], [585, 787, 363, B], [500, 654, 385, B], [722, 826, 385, B],
 [410, 567, 426, R], [606, 771, 426, B], [494, 638, 447, B], [738, 826, 447, B],
 [410, 451, 474, B], [478, 555, 474, B], [589, 654, 474, B], [722, 788, 474, B], [789, 826, 474, B], [505, 583, 481, B]
].forEach(([a, b, y, c]) => line(a, y, b, y, c, 2));
line(411, 363, 411, 370, R, 2); line(411, 417, 411, 426, R, 2);
line(825, 385, 825, 395, B, 2); line(828, 439, 828, 447, B, 2);
[[407, 371, "0.33"], [829, 394, "0.33"], [413, 424, "0.33"], [824, 446, "0.33"]].forEach(([x, y, s]) =>
  o.push(`<text transform="translate(${x + 1} ${y}) rotate(-90)">${s}</text>`));
[[417, 361, "0.50"], [463, 361, "3.03"], [530, 361, "1.90"], [558, 361, "0.20"], [602, 361, "1.00"], [621, 361, "0.40"], [687, 361, "4.56"], [753, 361, "0.40"], [772, 361, "1.00"],
 [500, 383, "0.20"], [530, 383, "1.90"], [585, 383, "2.24"], [621, 383, "0.40"], [639, 383, "1.00"], [735, 383, "1.00"], [753, 383, "0.40"], [787, 383, "2.10"], [820, 383, "0.33"],
 [417, 424, "0.50"], [463, 424, "3.03"], [530, 424, "1.90"], [560, 424, "0.40"], [610, 424, "0.40"], [621, 424, "0.40"], [687, 424, "4.56"], [753, 424, "0.40"], [765, 424, "0.40"],
 [499, 445, "0.40"], [530, 445, "1.90"], [585, 445, "2.24"], [621, 445, "0.40"], [632, 445, "0.40"], [743, 445, "0.40"], [754, 445, "0.40"], [787, 445, "2.10"], [820, 445, "0.34"],
 [417, 472, "0.44"], [436, 472, "1.00"], [491, 472, "1.00"], [530, 472, "1.90"], [568, 479, "1.00"], [602, 472, "1.00"], [621, 472, "0.40"], [639, 472, "1.00"], [735, 472, "1.00"], [753, 472, "0.40"], [772, 472, "1.00"], [802, 472, "1.00"], [820, 472, "0.34"]
].forEach(([x, y, s]) => text(x, y, s));
[[446, 367, "3Φ14 L=5.83"], [568, 389, "2Φ14 L=5.74"], [670, 367, "3Φ14 L=7.26"], [770, 389, "2Φ14 L=4.16"],
 [446, 430, "4Φ14 L=6.26"], [568, 451, "4Φ14 L=5.34"], [670, 430, "4Φ14 L=6.16"], [770, 451, "4Φ14 L=3.66"],
 [419, 478, "1Φ14 L=1.50"], [513, 478, "1Φ14 L=2.90"], [513, 485, "1Φ14 L=2.90"], [622, 478, "1Φ14 L=2.40"], [755, 478, "1Φ14 L=2.40"], [785, 478, "1Φ14 L=1.40"]
].forEach(([x, y, s]) => {
  o.push(`<circle cx="${x}" cy="${y - 1}" r="1.600" fill="none" stroke="#ff0"/>`);
  text(x + 3, y, s, "", "start");
});
/* colour scales */
[[350, 501, 46, ["+33.35", "+5.55", "-45.37"]], [350, 561, 51, ["+73.65", "-7.97", "-107.54"]]].forEach(([x, y, h, t]) => {
  rect(x, y, 30, h, "url(#gRain)");
  text(346, y + 3, t[0], "", "end"); text(346, y + h / 2 + 1, t[1], "", "end"); text(346, y + h - 1, t[2], "", "end");
});
/* bending moment and shear diagrams */
const shape = (d, f, s = "none") => o.push(`<path d="${d}" fill="${f}" stroke="${s}"/>`);
const YL = "#ffff00";
shape("M423 523l20 5h-20zM470 528q20-4 34-12v12z", "url(#gUp1)");
shape("M423 529h81v2h-14l-15 1h-12l-2-1h-21l-2 1h-15z", "#b8ff00", YL);
shape("M555 516q14 10 30 12h-30zM590 528q14-3 25-12v12z", "url(#gUp2)");
shape("M555 529h37q-12 3-37 3zM598 529h17z", "#b8ff00", YL);
shape("M626 501q12 22 25 27h-25zM724 528q10-3 24-26v26z", "url(#gUp3)");
shape("M647 529h80q-16 18-38 18.500t-42-18.500z", "url(#gLow3)", YL);
shape("M759 520q14 6 30 6t26-4v6h-56z", "url(#gUp1)");
shape("M793 529h22v2q-14 0-22-2z", "#b8ff00", YL);
shape("M423 582l50 5h-50z", "url(#gShU)"); shape("M430 588h74v7q-38 0-74-7z", "url(#gShL)");
shape("M555 579l48 8h-48z", "url(#gShU)"); shape("M560 588h55v10q-28-2-55-10z", "url(#gShL)");
shape("M626 561q34 10 62 26h-62z", "url(#gSh3)"); shape("M686 588h62v24q-28-2-62-24z", "url(#gSh4)");
shape("M759 581l56 5v1h-56z", "url(#gShU)"); shape("M764 588h51v4z", "url(#gShL)");
spans.forEach(([a, b]) => { line(a, 528.5, b, 528.5, R); line(a, 587.5, b, 587.5, R); });
sups.forEach(([a, b]) => [a, b].forEach((x) => {
  line(x, 338, x, 351, G);
  line(x, 351, x, 625, "#fff", 1, 'stroke-dasharray="4 2"');
}));
/* reinforcement schedule */
const C = [855.5, 866.5, 881.5, 896.5, 918.5, 940.5, 962.5, 984.5];
const ry = (k) => Math.round(355 + k * 6.15) + 0.5;
o.push(`<rect x="855.500" y="310.500" width="129" height="156" fill="none" stroke="${G}"/>`);
line(855, 321.5, 985, 321.5, G); line(918, 330.5, 985, 330.5, G); line(855, 347.5, 985, 347.5, G);
for (let k = 0; k < 18; k++) line(855, ry(k), 985, ry(k), G);
[1, 2, 3].forEach((i) => line(C[i], 321, C[i], ry(12), G));
line(C[4], 321, C[4], ry(15), G); line(C[5], 330, C[5], ry(15), G); line(C[6], 330, C[6], ry(15), G);
text(856, 317, "ΠΙΝΑΚΑΣ ΟΠΛΙΣΜΟΥ", "tt", "start"); text(951, 328, "ΟΛΙΚΟ ΜΗΚΟΣ", "tt");
text(929, 335, "Φ"); text(951, 335, "Φ"); text(973, 335, "Φ"); text(929, 343, "14");
[[862, "Αριθμός"], [871, "Διάμετρος"], [878, "ράβδου"], [890, "Τεμάχια"], [905, "Μήκος"], [913, "Τεμαχίου"]].forEach(([x, s]) =>
  o.push(`<text transform="translate(${x} 346) rotate(-90)">${s}</text>`));
[[874, "mm"], [907, "m"], [929, "m"], [951, "m"], [973, "m"]].forEach(([x, s]) => text(x, 352, s));
[["3", "5.83", "17.49"], ["3", "7.26", "14.72"], ["3", "5.74", "11.48"], ["2", "4.16", "8.36"], ["4", "6.26", "24.24"], ["4", "6.16", "24.64"], ["4", "5.34", "21.40"], ["4", "3.66", "14.63"], ["1", "1.50", "1.50"], ["2", "2.90", "5.80"], ["2", "2.40", "4.80"], ["1", "1.40", "1.40"]].forEach((r, k) => {
  const y = ry(k) + 4.5;
  text(857, y, k + 1, "", "start"); text(874, y, "14"); text(889, y, r[0]); text(917, y, r[1], "", "end"); text(939, y, r[2], "", "end");
});
[["Ολικό μήκος", 910, "m", "152.54"], ["Βάρος ανά m", 910, "kgr", "1.21"], ["Ολ.βάρος / Φ", 910, "kgr", "174.51"], ["Ολικό βάρος οπλισμού", 936, "kgr", "174.51"], ["Φθορά 5.00%", 936, "kgr", "8.73"], ["Γενικό σύνολο", 936, "kgr", "183.24"]].forEach((r, k) => {
  const y = ry(k + 12) + 4.5;
  text(856, y, r[0], "", "start"); text(r[1], y, r[2]); text(k < 3 ? 939 : 984, y, r[3], "", "end");
});
document.getElementById("cad").innerHTML = o.join("");
```
